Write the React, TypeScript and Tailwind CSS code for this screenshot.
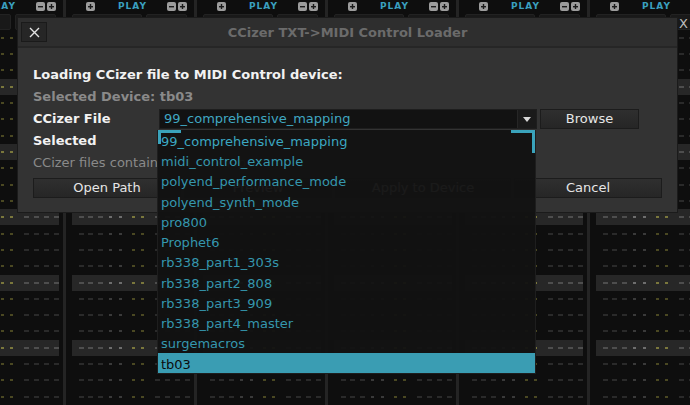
import React from 'react';

const FONT = "font-['DejaVu_Sans',sans-serif]";

const marks = [
  { cls: 'ml-[7px] w-[5px]', kind: 'dash' },
  { cls: 'ml-[4px] w-[5px]', kind: 'dash' },
  { cls: 'ml-[5px] w-[5px]', kind: 'dash' },
  { cls: 'ml-[6px] w-[3px]', kind: 'dot' },
  { cls: 'ml-[7px] w-[3px]', kind: 'dot' },
  { cls: 'ml-[10px] w-[3px]', kind: 'yel' },
  { cls: 'ml-[6px] w-[3px]', kind: 'yel' },
  { cls: 'ml-[11px] w-[5px]', kind: 'dash' },
  { cls: 'ml-[5px] w-[5px]', kind: 'dash' },
  { cls: 'ml-[5px] w-[5px]', kind: 'dash' },
  { cls: 'ml-[5px] w-[5px]', kind: 'dash' },
];

const files = [
  '99_comprehensive_mapping',
  'midi_control_example',
  'polyend_performance_mode',
  'polyend_synth_mode',
  'pro800',
  'Prophet6',
  'rb338_part1_303s',
  'rb338_part2_808',
  'rb338_part3_909',
  'rb338_part4_master',
  'surgemacros',
  'tb03',
];

function markColor(kind: string, band: boolean) {
  if (kind === 'dash') return band ? 'bg-[#4e4e4e]' : 'bg-[#2a2a2a]';
  if (kind === 'dot') return band ? 'bg-[#6e6e6e]' : 'bg-[#3a3a3a]';
  return band ? 'bg-[#7a773c]' : 'bg-[#4a4822]';
}

function PadIcon({ minus }: { minus?: boolean }) {
  return (
    <span className="flex h-[9px] w-[9px] items-center justify-center rounded-[2px] bg-[#9c9c9c]">
      <svg width="7" height="7" viewBox="0 0 7 7">
        <rect x="1" y="3" width="5" height="1.4" fill="#1a1a1a" />
        {!minus && <rect x="2.8" y="1" width="1.4" height="5" fill="#1a1a1a" />}
      </svg>
    </span>
  );
}

function TrackColumn() {
  const rows = Array.from({ length: 23 }, (_, i) => i);
  return (
    <div className="flex w-[128px] shrink-0 flex-col">
      <div className="flex h-[13px] items-center">
        <span className="ml-[20px]">
          <PadIcon />
        </span>
        <span className="ml-[23px] w-[24px] text-center text-[9px] font-bold leading-none tracking-[1px] text-[#3a9fbf]">
          PLAY
        </span>
        <span className="ml-[25px]">
          <PadIcon minus />
        </span>
        <span className="ml-[2px]">
          <PadIcon />
        </span>
      </div>
      <div className="mt-[1px] flex h-[16px]">
        <div className="ml-[6px] w-[70px] rounded-[2px] border border-[#222] bg-[#191919]" />
        <div className="ml-[4px] w-[41px] rounded-[2px] border border-[#222] bg-[#191919]" />
      </div>
      {rows.map((r) => {
        const band = r % 4 === 3;
        return (
          <div key={r} className="flex h-[16.5px] items-center">
            <div
              className={`ml-[6px] mr-[7px] flex h-[16px] flex-1 items-center ${band ? 'bg-[#272727]' : ''}`}
            >
              {marks.map((m, i) => (
                <span key={i} className={`h-[2px] shrink-0 ${m.cls} ${markColor(m.kind, band)}`} />
              ))}
            </div>
          </div>
        );
      })}
    </div>
  );
}

function Background() {
  return (
    <div className="-ml-[65px] flex h-full">
      {Array.from({ length: 6 }, (_, i) => (
        <React.Fragment key={i}>
          <TrackColumn />
          <div className="w-[3px] shrink-0 bg-[#242424]" />
        </React.Fragment>
      ))}
    </div>
  );
}

function Btn({ label, w }: { label: string; w: string }) {
  return (
    <div
      className={`flex h-[20px] items-center justify-center border border-[#1c1c1c] bg-gradient-to-b from-[#2f2f2f] to-[#262626] text-[13px] text-[#e6e6e6] ${w}`}
    >
      {label}
    </div>
  );
}

function Dialog() {
  return (
    <div className="absolute left-[17px] top-[17px] flex h-[196px] w-[661px] flex-col border border-[#1b1b1b] bg-[#333333]">
      <div className="flex h-[30px] items-center border-b-2 border-[#262626] bg-[#2e2e2e]">
        <button className="ml-[3px] flex h-[20px] w-[26px] items-center justify-center border border-[#1a1a1a] bg-[#262626]">
          <svg width="11" height="11" viewBox="0 0 11 11">
            <path d="M1 1 L10 10 M10 1 L1 10" stroke="#e4e4e4" strokeWidth="1.4" />
          </svg>
        </button>
        <div className="flex-1 pt-[2px] text-center text-[13px] font-bold text-[#6b6b6b]">
          CCizer TXT-&gt;MIDI Control Loader
        </div>
        <div className="w-[29px]" />
      </div>
      <div className="flex flex-col gap-[2px] px-[15px] pt-[17px] text-[13px] leading-[20px]">
        <div className="h-[20px] font-bold text-[#f2f2f2]">Loading CCizer file to MIDI Control device:</div>
        <div className="h-[20px] font-bold text-[#8a8a8a]">Selected Device: tb03</div>
        <div className="flex h-[20px] items-center">
          <div className="w-[126px] font-bold text-[#f2f2f2]">CCizer File</div>
          <div className="flex h-[20px] w-[378px] items-center border border-[#1e1e1e] bg-[#121212]">
            <span className="flex-1 pl-[4px] text-[#40a8c2]">99_comprehensive_mapping</span>
            <span className="flex h-full w-[19px] items-center justify-center border-l border-[#262626] bg-[#1a1a1a]">
              <svg width="8" height="5" viewBox="0 0 8 5">
                <path d="M0 0 L8 0 L4 5 Z" fill="#d8d8d8" />
              </svg>
            </span>
          </div>
          <div className="ml-[3px]">
            <Btn label="Browse" w="w-[99px]" />
          </div>
        </div>
        <div className="flex h-[20px]">
          <div className="w-[126px] font-bold text-[#f2f2f2]">Selected</div>
        </div>
        <div className="h-[20px] text-[#8a8a8a]">CCizer files contain MIDI CC maps</div>
        <div className="mt-[3px] flex gap-[3px]">
          <Btn label="Open Path" w="w-[148px]" />
          <Btn label="Preview" w="w-[148px]" />
          <Btn label="Apply to Device" w="w-[176px]" />
          <Btn label="Cancel" w="w-[148px]" />
        </div>
      </div>
    </div>
  );
}

function Dropdown() {
  return (
    <div className="absolute left-[157px] top-[130px] w-[379px] border-x border-b border-[#1e1e1e] bg-[#121212]/[0.96] text-[13px]">
      {files.map((f, i) => {
        const last = i === files.length - 1;
        return (
          <div
            key={f}
            className={`flex h-[20.25px] items-center pl-[3px] pt-[3px] ${
              last ? 'bg-[#3a9db3] text-[#0c0c0c]' : i === 0 ? 'text-[#3ba8c2]' : 'text-[#3597ae]'
            }`}
          >
            {f}
          </div>
        );
      })}
      <span className="absolute left-0 top-0 h-[3px] w-[23px] bg-[#3aa3bb]" />
      <span className="absolute left-0 top-0 h-[14px] w-[3px] bg-[#3aa3bb]" />
      <span className="absolute right-0 top-0 h-[3px] w-[24px] bg-[#3aa3bb]" />
      <span className="absolute right-0 top-0 h-[23px] w-[3px] bg-[#3aa3bb]" />
    </div>
  );
}

export default function App() {
  return (
    <div className={`relative h-[405px] w-[690px] overflow-hidden bg-[#0e0e0e] ${FONT}`}>
      <Background />
      <span className="absolute left-[679px] top-[14px] text-[13px] text-[#bdbdbd]">X</span>
      <Dialog />
      <Dropdown />
    </div>
  );
}
